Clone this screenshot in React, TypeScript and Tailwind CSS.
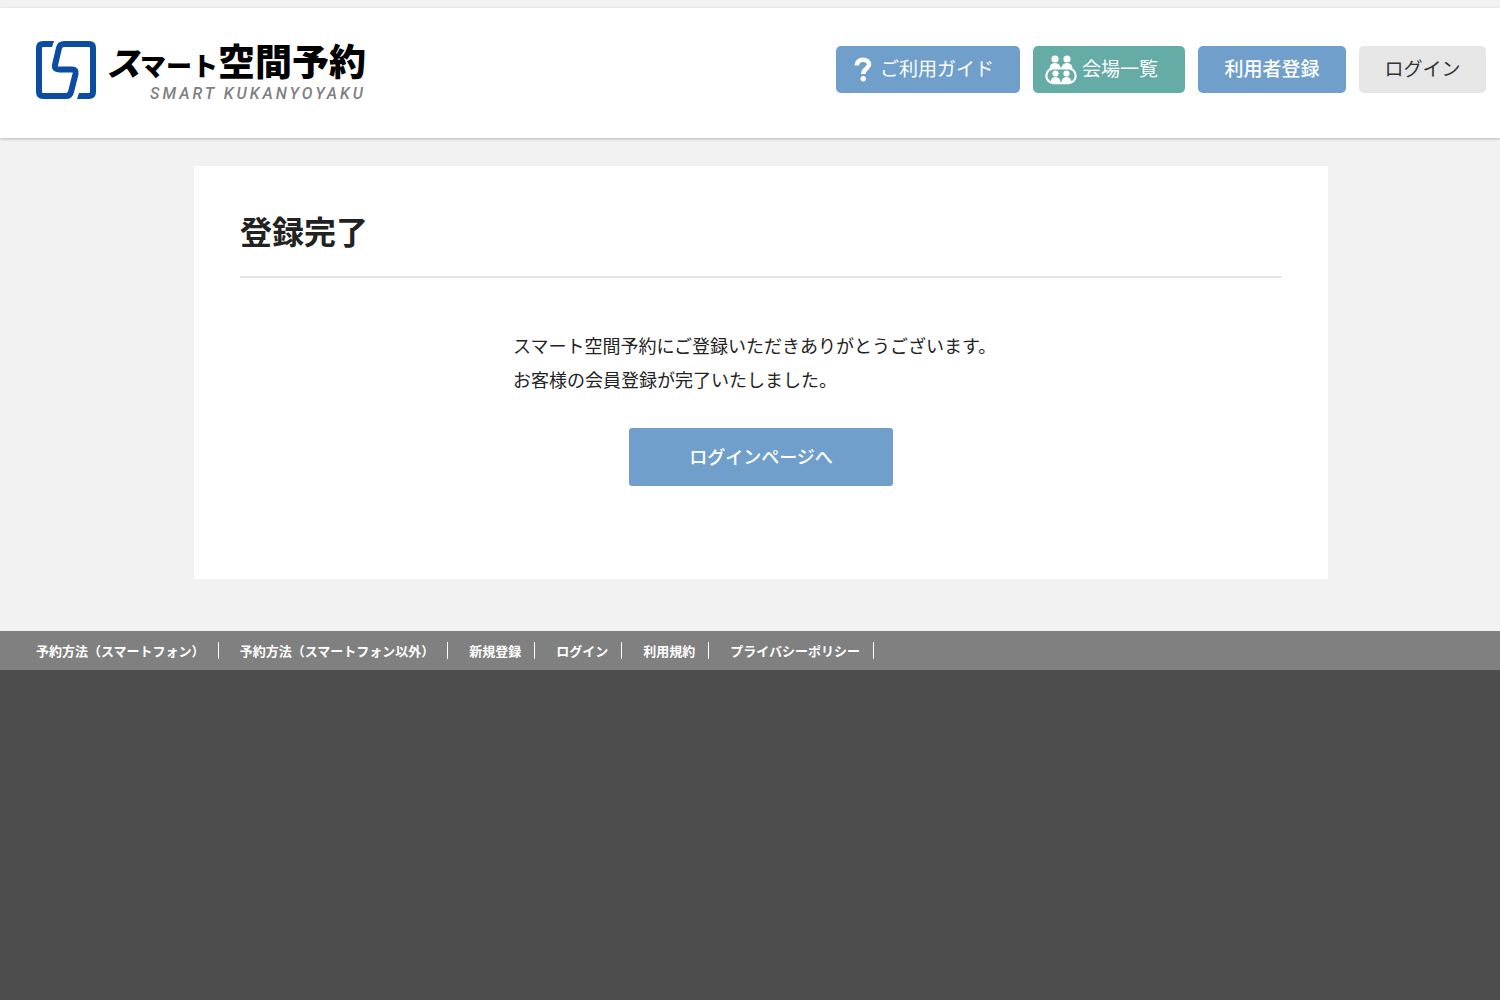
const footerLinks = [
  '予約方法（スマートフォン）',
  '予約方法（スマートフォン以外）',
  '新規登録',
  'ログイン',
  '利用規約',
  'プライバシーポリシー',
];

function LogoMark() {
  return (
    <svg viewBox="36 41 60 58" className="h-[58px] w-[60px] shrink-0" aria-hidden="true">
      <path
        d="M51 44H43Q39 44 39 48V92Q39 96 43 96H66Q70 96 71 92L75.500 74Q76.500 69.500 72 69.500H59Q54 69.500 55 65L59 48Q60 44 64 44H89Q93 44 93 48V92Q93 96 89 96H80"
        fill="none"
        stroke="#0d4da1"
        strokeWidth="6"
      />
      <path d="M50 41H54L52 47H50ZM81 99H77L79 93H81Z" fill="#0d4da1" />
    </svg>
  );
}

function Logo() {
  return (
    <span className="flex items-start gap-[10px]">
      <LogoMark />
      <span className="flex flex-col items-end whitespace-nowrap">
        <span className="flex items-baseline leading-[39px] font-black text-black">
          <span className="text-[34px] italic">ス</span>
          <span className="text-[26px]">マート</span>
          <span className="text-[37px]">空間予約</span>
        </span>
        <span className="font-[Roboto,sans-serif] text-[16px] leading-5 font-medium tracking-[3px] text-[#808080] italic">
          SMART KUKANYOYAKU
        </span>
      </span>
    </span>
  );
}

function QuestionIcon() {
  return (
    <svg viewBox="0 0 18 25" className="h-[25px] w-[18px]" aria-hidden="true">
      <path
        d="M2.800 8.500C2.800 4.800 5.500 2.800 9 2.800S15 4.600 15 7.600C15 11.800 9.300 11.500 9.300 17"
        fill="none"
        stroke="#fff"
        strokeWidth="4.500"
      />
      <circle cx="9.200" cy="21.800" r="2.700" fill="#fff" />
    </svg>
  );
}

function PeopleIcon() {
  return (
    <svg viewBox="0 0 32 30" className="h-[30px] w-8" aria-hidden="true" fill="#fff">
      <circle cx="10" cy="4" r="3.600" />
      <circle cx="22" cy="4" r="3.600" />
      <path d="M4.500 14Q4.500 8 10 8T15.500 14ZM16.500 14Q16.500 8 22 8T27.500 14Z" />
      <rect x="1.300" y="13.300" width="29.400" height="14.800" rx="7.400" fill="none" stroke="#fff" strokeWidth="2.200" />
      <circle cx="10.500" cy="18.500" r="3.100" />
      <circle cx="21.500" cy="18.500" r="3.100" />
      <path d="M5.500 28Q5.500 22 10.500 22T15.500 28ZM16.500 28Q16.500 22 21.500 22T26.500 28Z" />
    </svg>
  );
}

export default function App() {
  return (
    <div className="flex min-h-screen flex-col bg-[#f2f2f2] font-['Noto_Sans_CJK_JP',sans-serif] text-[#222]">
      <header className="z-10 mt-2 flex items-start justify-between bg-white pt-[33px] pr-[14px] pb-[34px] pl-9 shadow-[0_1px_3px_rgba(0,0,0,0.25)]">
        <a href="#">
          <Logo />
        </a>
        <nav className="mt-[5px] flex gap-[13px] text-[19px] whitespace-nowrap text-white">
          <a href="#" className="flex h-[47px] w-[184px] items-center gap-2 rounded-[5px] bg-[#6f9fca] pl-[18px]">
            <QuestionIcon />
            <span className="pb-0.5">ご利用ガイド</span>
          </a>
          <a href="#" className="flex h-[47px] w-[152px] items-center gap-[5px] rounded-[5px] bg-[#65aca6] pl-3">
            <PeopleIcon />
            <span className="pb-0.5">会場一覧</span>
          </a>
          <a href="#" className="flex h-[47px] w-[148px] items-center justify-center rounded-[5px] bg-[#6f9fca] pb-0.5 font-medium">
            利用者登録
          </a>
          <a href="#" className="flex h-[47px] w-[127px] items-center justify-center rounded-[5px] bg-[#e6e6e6] pb-0.5 text-[#333]">
            ログイン
          </a>
        </nav>
      </header>

      <main className="pt-7 pb-[52px] pl-[22px]">
        <section className="mx-auto max-w-[1134px] bg-white px-[46px] pt-10 pb-[93px]">
          <h1 className="border-b-2 border-[#e6e6e6] pb-[22px] text-[32px] leading-[48px] font-bold">登録完了</h1>
          <div className="mx-auto mt-[50px] max-w-[496px]">
            <p className="text-[18px] leading-[34px]">
              スマート空間予約にご登録いただきありがとうございます。
              <br />
              お客様の会員登録が完了いたしました。
            </p>
            <a
              href="#"
              className="mx-auto mt-8 flex h-[58px] w-[264px] items-center justify-center rounded-[3px] bg-[#6f9fca] pb-0.5 text-[18px] font-medium text-white"
            >
              ログインページへ
            </a>
          </div>
        </section>
      </main>

      <footer className="flex grow flex-col bg-[#4d4d4d]">
        <ul className="flex flex-wrap bg-[#808080] py-[11px] pl-[15px] text-[13px] leading-[17px] font-bold text-white">
          {footerLinks.map((label) => (
            <li key={label} className="border-r border-white pr-[13px] pl-[21px]">
              <a href="#">{label}</a>
            </li>
          ))}
        </ul>
      </footer>
    </div>
  );
}
